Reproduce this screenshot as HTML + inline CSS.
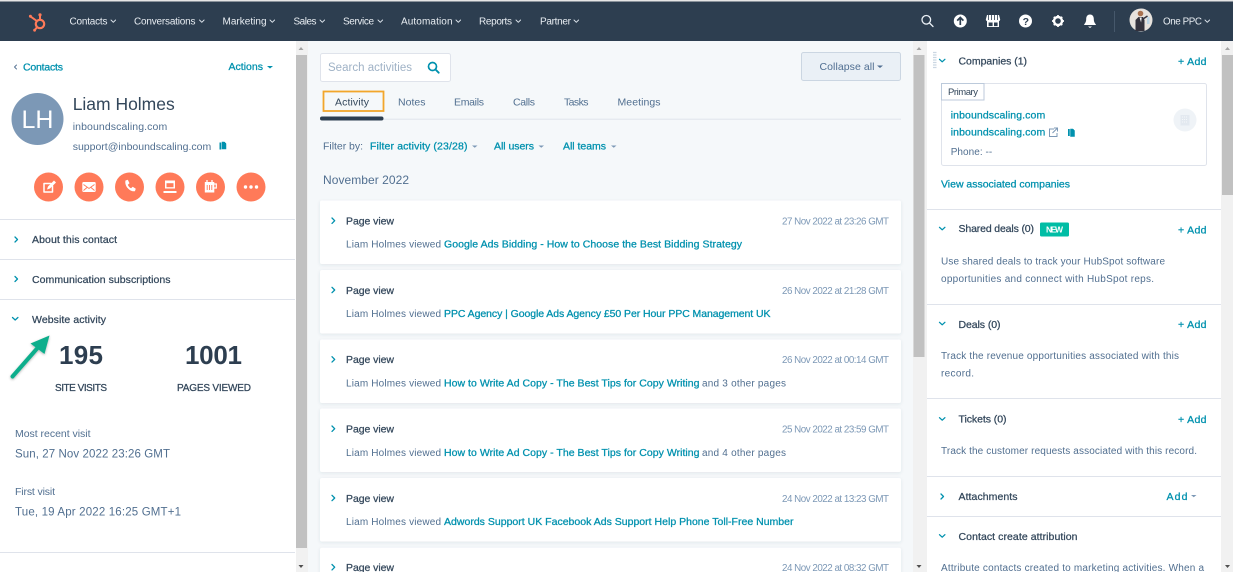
<!DOCTYPE html>
<html lang="en"><head><meta charset="utf-8"><title>Liam Holmes</title>
<style>
html,body{margin:0;padding:0;width:1233px;height:572px;overflow:hidden;background:#fff}
svg{display:block;filter:blur(.3px)}
text{font-family:"Liberation Sans",sans-serif;font-size:10.5px;fill:#33475b}
.n{fill:#e8edf2;font-size:10px}
.l{fill:#0091ae;stroke:#0091ae;stroke-width:.28px;font-size:10.5px}
.m{fill:#33475b;stroke:#33475b;stroke-width:.25px;font-size:10.5px}
.g{fill:#516f90;font-size:10.5px}
.d{fill:#7c98b6;font-size:9.8px}
.t{fill:#516f90;font-size:10.5px}
.ic{fill:none;stroke:#fff;stroke-width:1.5;stroke-linecap:round;stroke-linejoin:round}
.ch{fill:none;stroke:#0091ae;stroke-width:1.3;stroke-linecap:round;stroke-linejoin:round}
.nc{fill:none;stroke:#dfe6ee;stroke-width:.9;stroke-linecap:round;stroke-linejoin:round}
</style></head><body>
<svg xmlns="http://www.w3.org/2000/svg" width="1233" height="572" viewBox="0 0 1233 572">
<defs>
<filter id="s" x="-5%" y="-20%" width="110%" height="140%"><feDropShadow dx="0" dy="1" stdDeviation="1.5" flood-color="#33475b" flood-opacity=".1"/></filter>
<filter id="s2" x="-30%" y="-30%" width="160%" height="160%"><feDropShadow dx="0" dy="1" stdDeviation="1.2" flood-color="#000" flood-opacity=".3"/></filter>
</defs>
<rect width="1233" height="572" fill="#fff"/>
<rect x="0" y="0" width="1233" height="1.5" fill="#e6e6e6"/>
<rect x="0" y="1.5" width="1233" height="39.5" fill="#2d3e50"/>

<!-- logo -->
<g fill="none" stroke="#ff7a59" stroke-width="2">
<circle cx="40" cy="24" r="4.2" stroke-width="2.2"/>
<path d="M40 19.5V15.5M36.8 21L31 16.8M37 27.2L34.8 30"/>
</g>
<circle cx="40" cy="14.8" r="1.6" fill="#ff7a59"/><circle cx="30.4" cy="16.2" r="1.5" fill="#ff7a59"/><circle cx="34.6" cy="30.2" r="1.4" fill="#ff7a59"/>

<!-- nav -->
<text class="n" x="69.5" y="24.5" textLength="38" lengthAdjust="spacing">Contacts</text><path class="nc" d="M111 20l2.300 2.300 2.300-2.300"/>
<text class="n" x="134" y="24.5" textLength="61.5" lengthAdjust="spacing">Conversations</text><path class="nc" d="M199.500 20l2.300 2.300 2.300-2.300"/>
<text class="n" x="222.5" y="24.5" textLength="44" lengthAdjust="spacing">Marketing</text><path class="nc" d="M270 20l2.300 2.300 2.300-2.300"/>
<text class="n" x="293.5" y="24.5" textLength="23" lengthAdjust="spacing">Sales</text><path class="nc" d="M320 20l2.300 2.300 2.300-2.300"/>
<text class="n" x="343" y="24.5" textLength="31" lengthAdjust="spacing">Service</text><path class="nc" d="M378 20l2.300 2.300 2.300-2.300"/>
<text class="n" x="401" y="24.5" textLength="51.5" lengthAdjust="spacing">Automation</text><path class="nc" d="M456 20l2.300 2.300 2.300-2.300"/>
<text class="n" x="479" y="24.5" textLength="33" lengthAdjust="spacing">Reports</text><path class="nc" d="M516 20l2.300 2.300 2.300-2.300"/>
<text class="n" x="540" y="24.5" textLength="31" lengthAdjust="spacing">Partner</text><path class="nc" d="M574 20l2.300 2.300 2.300-2.300"/>

<!-- nav right icons -->
<g fill="none" stroke="#eaf0f6" stroke-width="1.3" stroke-linecap="round"><circle cx="926.3" cy="19.8" r="4.3"/><path d="M929.5 23l3.5 3.5"/></g>
<circle cx="960.3" cy="21" r="6.5" fill="#fff"/><path d="M960.3 25v-7M957.2 20.6l3.1-3.1 3.1 3.1" fill="none" stroke="#2d3e50" stroke-width="1.7"/>
<path d="M987 15h12l1.200 4.500a2 2 0 0 1-1.200 1.700V27h-12v-5.800a2 2 0 0 1-1.200-1.700z" fill="#fff"/><path d="M988.500 15v5M991.500 15v5M994.500 15v5M997.500 15v5" stroke="#2d3e50" stroke-width=".8"/><rect x="988.600" y="22.500" width="4" height="3.600" fill="#2d3e50"/><rect x="994" y="22.500" width="3.600" height="3.600" fill="#2d3e50"/>
<circle cx="1025.500" cy="21" r="6.500" fill="#fff"/><text x="1022.600" y="24.800" style="font-size:10.500px;font-weight:bold;fill:#2d3e50">?</text>
<circle cx="1058" cy="21" r="4" fill="none" stroke="#fff" stroke-width="2.400"/><path d="M1058 15v2.500M1058 24.500V27M1052 21h2.500M1061.500 21h2.500M1053.800 16.800l1.700 1.700M1060.500 23.500l1.700 1.700M1053.800 25.200l1.700-1.700M1060.500 18.500l1.700-1.700" stroke="#fff" stroke-width="1.700"/>
<path d="M1090 14.500c2.800 0 3.800 2.200 3.800 4.500 0 3 1 4 2 5.300v.7h-11.600v-.7c1-1.300 2-2.300 2-5.300 0-2.300 1-4.500 3.800-4.500z" fill="#fff"/><path d="M1088 26.500h4l-2 1.500z" fill="#fff"/>
<rect x="1114" y="11" width="1" height="21" fill="#46586b"/>
<circle cx="1141" cy="20" r="11.500" fill="#e7e2dd"/>
<path d="M1135.500 31v-11l3-3h4.500l1.500 3v11z" fill="#33323d"/><circle cx="1140.500" cy="13.500" r="2.800" fill="#a8714f"/><path d="M1139.500 17.500h2.200l-.6 5z" fill="#f4f4f4"/><path d="M1143 19l4.500-3" stroke="#33323d" stroke-width="1.500"/><path d="M1147 17h2.500v7h-2.500z" fill="#bcd6e6"/>
<text class="n" x="1163" y="24.500" textLength="39" lengthAdjust="spacing" style="font-size:9.800px">One PPC</text><path class="nc" d="M1205 20l2.300 2.300 2.300-2.300"/>

<!-- middle -->
<rect x="308" y="41" width="605" height="531" fill="#f5f8fa"/>

<!-- scrollbars -->
<rect x="296" y="41" width="12" height="531" fill="#f1f1f1"/><rect x="296" y="55" width="11" height="493" fill="#c1c1c1"/>
<rect x="913" y="41" width="14" height="531" fill="#f1f1f1"/><rect x="913.500" y="55" width="11" height="302" fill="#c1c1c1"/>
<rect x="1221" y="41" width="12" height="531" fill="#f1f1f1"/><rect x="1222" y="55" width="11" height="140" fill="#c1c1c1"/>
<path d="M298.500 50l2.500-3 2.500 3z" fill="#a3a3a3"/><path d="M298.500 565l2.500 3 2.500-3z" fill="#505050"/>
<path d="M916.500 50l2.500-3 2.500 3z" fill="#a3a3a3"/><path d="M916.500 565l2.500 3 2.500-3z" fill="#505050"/>
<path d="M1225 50l2.500-3 2.500 3z" fill="#a3a3a3"/><path d="M1225 565l2.500 3 2.500-3z" fill="#505050"/>

<!-- left panel -->
<path class="ch" d="M16.500 65l-2 2 2 2" style="stroke-width:.9;stroke:#516f90"/>
<text class="l" x="23" y="70.500" textLength="40" lengthAdjust="spacing">Contacts</text>
<text class="l" x="228.500" y="70" textLength="34.500" lengthAdjust="spacing">Actions</text>
<path d="M267 66h6l-3 2.500z" fill="#0091ae"/>
<circle cx="37.500" cy="119" r="26" fill="#7c98b6"/>
<text x="37.500" y="128" text-anchor="middle" style="font-size:25px;fill:#fff">LH</text>
<text x="72.700" y="110" textLength="102" lengthAdjust="spacing" style="font-size:17.500px;fill:#33475b">Liam Holmes</text>
<text class="g" x="72.700" y="130" textLength="94.500" lengthAdjust="spacing">inboundscaling.com</text>
<text class="g" x="72.700" y="150" textLength="138.500" lengthAdjust="spacing">support@inboundscaling.com</text>
<path d="M219.500 142.500h3v7h-3z" fill="#0091ae"/><path d="M221.500 141.500h3l2 2v6h-5z" fill="#0091ae" stroke="#fff" stroke-width=".5"/>

<g fill="#ff7a59"><circle cx="48.500" cy="187" r="14.500"/><circle cx="89" cy="187" r="14.500"/><circle cx="129.500" cy="187" r="14.500"/><circle cx="170" cy="187" r="14.500"/><circle cx="210.500" cy="187" r="14.500"/><circle cx="251" cy="187" r="14.500"/></g>
<path class="ic" d="M51 183.500h-7v8.500h8.500v-6"/><path d="M47 189.500l1-3 6-6 2 2-6 6z" fill="#fff"/>
<rect x="82.300" y="182" width="13.400" height="10" rx="1.200" fill="#fff"/><path d="M83.500 184.500l5.500 4 5.500-4M83.500 190.500l3.500-3M94.500 190.500l-3.500-3" fill="none" stroke="#ff7a59" stroke-width=".9"/>
<path d="M125.500 180.500l2.300-.8 1.700 3.500-1.700 1.500c.6 1.600 1.800 2.900 3.300 3.600l1.600-1.500 3.100 2-.9 2.400c-4.800.9-10.800-5-9.400-10.700z" fill="#fff"/>
<path d="M165 180.500h10v8h-10z" fill="#fff"/><rect x="166.500" y="183.200" width="7" height="4" fill="#ff7a59"/><path d="M163.500 191h13v2h-13z" fill="#fff"/>
<path d="M204.800 182h9.500v10.500h-9.500z" fill="#fff"/><path d="M214 184h2.300v4h-2.300" fill="none" stroke="#fff" stroke-width="1.200"/><path d="M207 180v2.500M212 180v2.500" stroke="#fff" stroke-width="1.300"/><path d="M207.200 185v5M209.500 185v5M211.800 185v5" stroke="#ff7a59" stroke-width=".9"/>
<circle cx="245.500" cy="187" r="1.700" fill="#fff"/><circle cx="251" cy="187" r="1.700" fill="#fff"/><circle cx="256.500" cy="187" r="1.700" fill="#fff"/>

<g fill="#dfe3eb"><rect x="0" y="219" width="295" height="1"/><rect x="0" y="259" width="295" height="1"/><rect x="0" y="299" width="295" height="1"/><rect x="0" y="552" width="295" height="1"/></g>
<path class="ch" d="M15 237l2.500 2.500-2.500 2.500"/><text class="m" x="32" y="243" textLength="85" lengthAdjust="spacing">About this contact</text>
<path class="ch" d="M15 276.500l2.500 2.500-2.500 2.500"/><text class="m" x="32" y="283" textLength="138.500" lengthAdjust="spacing">Communication subscriptions</text>
<path class="ch" d="M12.500 317.500l2.700 2.500 2.700-2.500"/><text class="m" x="32" y="322.800" textLength="74" lengthAdjust="spacing">Website activity</text>

<text x="81" y="364" text-anchor="middle" textLength="44" lengthAdjust="spacing" style="font-size:26px;font-weight:bold;fill:#2d3e50">195</text>
<text x="213.500" y="364" text-anchor="middle" textLength="57" lengthAdjust="spacing" style="font-size:26px;font-weight:bold;fill:#2d3e50">1001</text>
<text x="55" y="391" textLength="52" lengthAdjust="spacing" style="font-size:10px;fill:#33475b;stroke:#33475b;stroke-width:.25px">SITE VISITS</text>
<text x="177" y="391" textLength="74" lengthAdjust="spacing" style="font-size:10px;fill:#33475b;stroke:#33475b;stroke-width:.25px">PAGES VIEWED</text>
<g filter="url(#s2)"><path d="M12.500 376.500L37.500 348" stroke="#0fae8c" stroke-width="4" stroke-linecap="round"/><path d="M49.500 335.500L30.500 343.500 44.500 354z" fill="#0fae8c"/></g>

<text class="g" x="15" y="437" textLength="75.500" lengthAdjust="spacing">Most recent visit</text>
<text class="g" x="15" y="457.500" textLength="155" lengthAdjust="spacing" style="font-size:11.500px">Sun, 27 Nov 2022 23:26 GMT</text>
<text class="g" x="15" y="495" textLength="40" lengthAdjust="spacing">First visit</text>
<text class="g" x="15" y="515.500" textLength="166" lengthAdjust="spacing" style="font-size:11.500px">Tue, 19 Apr 2022 16:25 GMT+1</text>

<!-- middle top -->
<rect x="320.500" y="53.500" width="130" height="28" rx="2" fill="#fff" stroke="#dfe3eb"/>
<text x="328" y="71" textLength="84" lengthAdjust="spacing" style="font-size:11.500px;fill:#9fb2c6">Search activities</text>
<circle cx="432.500" cy="66.500" r="4" fill="none" stroke="#0091ae" stroke-width="1.700"/><path d="M435.500 69.500l3.200 3.200" stroke="#0091ae" stroke-width="1.900" stroke-linecap="round"/>
<rect x="801.500" y="52.500" width="99" height="28" rx="2" fill="#eaf0f6" stroke="#cbd6e2"/>
<text x="819.500" y="70" textLength="55" lengthAdjust="spacing" style="font-size:10.500px;fill:#506e91">Collapse all</text><path d="M877 65.500h6l-3 2.500z" fill="#506e91"/>

<rect x="320" y="118.700" width="581" height="1" fill="#dfe3eb"/>
<rect x="320" y="116.500" width="63.500" height="4" rx="2" fill="#2d3e50"/>
<rect x="323.500" y="91.500" width="60" height="19.500" fill="none" stroke="#f2a62b" stroke-width="1.800"/>
<text x="335" y="105.500" textLength="34" lengthAdjust="spacing" style="font-size:10.500px;fill:#33475b">Activity</text>
<text class="t" x="398" y="105.500" textLength="27.500" lengthAdjust="spacing">Notes</text>
<text class="t" x="454" y="105.500" textLength="30" lengthAdjust="spacing">Emails</text>
<text class="t" x="513" y="105.500" textLength="22" lengthAdjust="spacing">Calls</text>
<text class="t" x="564" y="105.500" textLength="24.500" lengthAdjust="spacing">Tasks</text>
<text class="t" x="617.500" y="105.500" textLength="43" lengthAdjust="spacing">Meetings</text>

<text class="t" x="323" y="149.500" textLength="40" lengthAdjust="spacing">Filter by:</text>
<text class="l" x="370" y="149.500" textLength="97.500" lengthAdjust="spacing">Filter activity (23/28)</text><path d="M472 145.500h5.500l-2.750 2.300z" fill="#7c98b6"/>
<text class="l" x="494" y="149.500" textLength="40" lengthAdjust="spacing">All users</text><path d="M538.500 145.500h5.500l-2.750 2.300z" fill="#7c98b6"/>
<text class="l" x="563" y="149.500" textLength="43" lengthAdjust="spacing">All teams</text><path d="M611 145.500h5.500l-2.750 2.300z" fill="#7c98b6"/>
<text x="323" y="184" textLength="86" lengthAdjust="spacing" style="font-size:12px;fill:#516f90">November 2022</text>

<!-- cards -->
<g fill="#fff" filter="url(#s)">
<rect x="320" y="200.500" width="581" height="63.500" rx="2"/>
<rect x="320" y="270" width="581" height="63.500" rx="2"/>
<rect x="320" y="339.500" width="581" height="63.500" rx="2"/>
<rect x="320" y="408.500" width="581" height="63.500" rx="2"/>
<rect x="320" y="478" width="581" height="63.500" rx="2"/>
<rect x="320" y="547.700" width="581" height="40" rx="2"/>
</g>

<path class="ch" d="M332 218l2.700 2.700-2.700 2.700"/><text class="m" x="346" y="224.500" textLength="48" lengthAdjust="spacing">Page view</text>
<text class="d" x="782" y="224.500" textLength="107" lengthAdjust="spacing">27 Nov 2022 at 23:26 GMT</text>
<text class="t" x="346" y="247.500" textLength="95" lengthAdjust="spacing" style="font-size:10px">Liam Holmes viewed</text>
<text class="l" x="444" y="247.500" textLength="298" lengthAdjust="spacing">Google Ads Bidding - How to Choose the Best Bidding Strategy</text>

<path class="ch" d="M332 287.300l2.700 2.700-2.700 2.700"/><text class="m" x="346" y="293.800" textLength="48" lengthAdjust="spacing">Page view</text>
<text class="d" x="782" y="293.800" textLength="107" lengthAdjust="spacing">26 Nov 2022 at 21:28 GMT</text>
<text class="t" x="346" y="317" textLength="95" lengthAdjust="spacing" style="font-size:10px">Liam Holmes viewed</text>
<text class="l" x="444" y="317" textLength="326.500" lengthAdjust="spacing">PPC Agency | Google Ads Agency £50 Per Hour PPC Management UK</text>

<path class="ch" d="M332 356.700l2.700 2.700-2.700 2.700"/><text class="m" x="346" y="363.200" textLength="48" lengthAdjust="spacing">Page view</text>
<text class="d" x="782" y="363.200" textLength="107" lengthAdjust="spacing">26 Nov 2022 at 00:14 GMT</text>
<text class="t" x="346" y="386.500" textLength="95" lengthAdjust="spacing" style="font-size:10px">Liam Holmes viewed</text>
<text class="l" x="444" y="386.500" textLength="255.500" lengthAdjust="spacing">How to Write Ad Copy - The Best Tips for Copy Writing</text>
<text class="t" x="702" y="386.500" textLength="84" lengthAdjust="spacing" style="font-size:10px">and 3 other pages</text>

<path class="ch" d="M332 426l2.700 2.700-2.700 2.700"/><text class="m" x="346" y="432.500" textLength="48" lengthAdjust="spacing">Page view</text>
<text class="d" x="782" y="432.500" textLength="107" lengthAdjust="spacing">25 Nov 2022 at 23:59 GMT</text>
<text class="t" x="346" y="456" textLength="95" lengthAdjust="spacing" style="font-size:10px">Liam Holmes viewed</text>
<text class="l" x="444" y="456" textLength="255.500" lengthAdjust="spacing">How to Write Ad Copy - The Best Tips for Copy Writing</text>
<text class="t" x="702" y="456" textLength="84" lengthAdjust="spacing" style="font-size:10px">and 4 other pages</text>

<path class="ch" d="M332 495.300l2.700 2.700-2.700 2.700"/><text class="m" x="346" y="501.800" textLength="48" lengthAdjust="spacing">Page view</text>
<text class="d" x="782" y="501.800" textLength="107" lengthAdjust="spacing">24 Nov 2022 at 13:23 GMT</text>
<text class="t" x="346" y="525" textLength="95" lengthAdjust="spacing" style="font-size:10px">Liam Holmes viewed</text>
<text class="l" x="444" y="525" textLength="349.500" lengthAdjust="spacing">Adwords Support UK Facebook Ads Support Help Phone Toll-Free Number</text>

<path class="ch" d="M332 564.500l2.700 2.700-2.700 2.700"/><text class="m" x="346" y="571" textLength="48" lengthAdjust="spacing">Page view</text>
<text class="d" x="782" y="571" textLength="107" lengthAdjust="spacing">24 Nov 2022 at 08:32 GMT</text>

<!-- right panel -->
<rect x="927" y="41" width="294" height="531" fill="#fff"/>
<path d="M933 52.500h3.500M933 55h3.500M933 57.500h3.500M933 60h3.500M933 62.500h3.500M933 65h3.500M933 67.500h3.500" stroke="#cbd6e2" stroke-width="1.200"/>
<path class="ch" d="M939.500 59.300l2.700 2.500 2.700-2.500"/>
<text class="m" x="958.500" y="64.500" textLength="68.500" lengthAdjust="spacing">Companies (1)</text>
<text class="l" x="1178" y="64.800" textLength="28.500" lengthAdjust="spacing">+ Add</text>
<rect x="941.500" y="83.500" width="265" height="82" rx="2" fill="#fff" stroke="#dfe3eb"/>
<rect x="941.500" y="83.500" width="42.500" height="16.500" fill="#fff" stroke="#bccadb"/>
<text x="948" y="94.800" textLength="30" lengthAdjust="spacing" style="font-size:9.500px;fill:#33475b">Primary</text>
<text class="l" x="950.700" y="118.500" textLength="94.500" lengthAdjust="spacing">inboundscaling.com</text>
<text class="l" x="950.700" y="135.700" textLength="94.500" lengthAdjust="spacing">inboundscaling.com</text>
<path d="M1054 129h-4.500v7.500h7.500V133M1052.500 133l4.500-4.500M1054 128h3.500v3.500" fill="none" stroke="#7c98b6" stroke-width="1"/>
<path d="M1068 129h3v7h-3z" fill="#0091ae"/><path d="M1070 128.500h3l2 2v6.500h-5z" fill="#0091ae" stroke="#fff" stroke-width=".5"/>
<text class="t" x="950.700" y="155" textLength="41.500" lengthAdjust="spacing" style="font-size:10px">Phone: --</text>
<circle cx="1185" cy="120" r="11.500" fill="#eff3f7"/><rect x="1180.500" y="115" width="9" height="10.500" fill="#e3e9f0"/><path d="M1182 117h6M1182 119.500h6M1182 122h6" stroke="#f5f8fa" stroke-dasharray="1 1"/>
<text class="l" x="941" y="187.500" textLength="129" lengthAdjust="spacing">View associated companies</text>

<g fill="#dfe3eb"><rect x="927" y="209" width="294" height="1"/><rect x="927" y="304" width="294" height="1"/><rect x="927" y="398" width="294" height="1"/><rect x="927" y="476" width="294" height="1"/><rect x="927" y="516" width="294" height="1"/></g>

<path class="ch" d="M939.500 227.300l2.700 2.500 2.700-2.500"/>
<text class="m" x="958.500" y="232.200" textLength="75.500" lengthAdjust="spacing">Shared deals (0)</text>
<rect x="1040" y="222.500" width="29" height="14" rx="1.500" fill="#00bda5"/>
<text x="1054.500" y="232.500" text-anchor="middle" textLength="17" lengthAdjust="spacing" style="font-size:8.500px;font-weight:bold;fill:#fff">NEW</text>
<text class="l" x="1178" y="233.500" textLength="28.500" lengthAdjust="spacing">+ Add</text>
<text class="t" x="941" y="264.500" textLength="224" lengthAdjust="spacing" style="font-size:10px">Use shared deals to track your HubSpot software</text>
<text class="t" x="941" y="282" textLength="213" lengthAdjust="spacing" style="font-size:10px">opportunities and connect with HubSpot reps.</text>

<path class="ch" d="M939.500 322.300l2.700 2.500 2.700-2.500"/>
<text class="m" x="958.500" y="328" textLength="42" lengthAdjust="spacing">Deals (0)</text>
<text class="l" x="1178" y="328" textLength="28.500" lengthAdjust="spacing">+ Add</text>
<text class="t" x="941" y="359" textLength="238" lengthAdjust="spacing" style="font-size:10px">Track the revenue opportunities associated with this</text>
<text class="t" x="941" y="376.500" textLength="33" lengthAdjust="spacing" style="font-size:10px">record.</text>

<path class="ch" d="M939.500 417.700l2.700 2.500 2.700-2.500"/>
<text class="m" x="958.500" y="422.500" textLength="48" lengthAdjust="spacing">Tickets (0)</text>
<text class="l" x="1178" y="422.800" textLength="28.500" lengthAdjust="spacing">+ Add</text>
<text class="t" x="941" y="454" textLength="256" lengthAdjust="spacing" style="font-size:10px">Track the customer requests associated with this record.</text>

<path class="ch" d="M941 494l2.500 2.500-2.500 2.500"/>
<text class="m" x="958.500" y="500" textLength="59" lengthAdjust="spacing">Attachments</text>
<text class="l" x="1166.500" y="499.800" textLength="21" lengthAdjust="spacing">Add</text><path d="M1191 495h5.500l-2.750 2.300z" fill="#7c98b6"/>

<path class="ch" d="M939.500 534.700l2.700 2.500 2.700-2.500"/>
<text class="m" x="958.500" y="540" textLength="119" lengthAdjust="spacing">Contact create attribution</text>
<text class="t" x="941" y="571" textLength="263" lengthAdjust="spacing" style="font-size:10px">Attribute contacts created to marketing activities. When a</text>
</svg>
</body></html>
